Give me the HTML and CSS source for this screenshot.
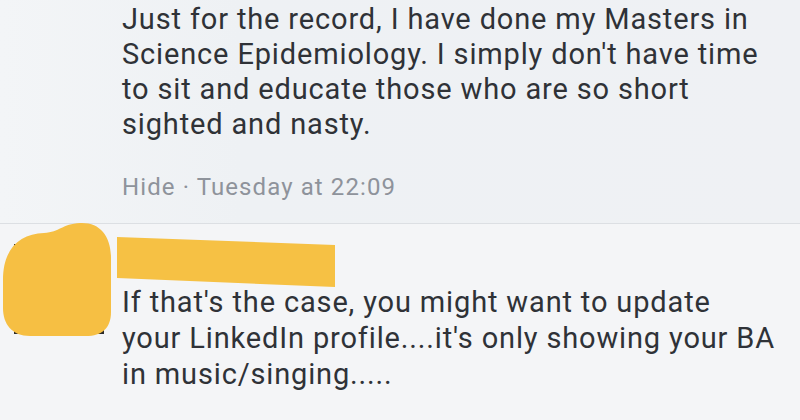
FILE: index.html
```html
<!DOCTYPE html>
<html>
<head>
<meta charset="utf-8">
<link rel="stylesheet" href="styles.css">
</head>
<body>
<div class="thread">
  <section class="comment comment-top">
    <div class="spacer"></div>
    <div class="body">
      <p class="text text-top">Just for the record, I have done my Masters in Science Epidemiology. I simply don't have time to sit and educate those who are so short sighted and nasty.</p>
      <div class="meta">Hide · Tuesday at 22:09</div>
    </div>
  </section>
  <section class="comment comment-bottom">
    <div class="avatar">
      <svg width="112" height="116" viewBox="0 0 112 116">
        <rect x="14" y="22" width="90" height="90" fill="#2a2a2a"/>
        <path d="M3,58 C3,26 20,12 44,11 C60,10 62,2 80,1 C100,0 111,14 111,36 L111,90 C111,106 102,114 86,114 L30,114 C12,114 3,102 3,86 Z" fill="#f6bf43"/>
      </svg>
    </div>
    <div class="body">
      <div class="name"><svg width="220" height="50" viewBox="0 0 220 50"><path d="M0,0 L218,8 L218,50 L0,41 Z" fill="#f6c144"/></svg></div>
      <p class="text text-bottom">If that's the case, you might want to update your LinkedIn profile....it's only showing your BA in music/singing.....</p>
    </div>
  </section>
</div>
</body>
</html>
```

FILE: styles.css
```css
html, body {
  margin: 0;
  padding: 0;
}
body {
  width: 800px;
  height: 420px;
  overflow: hidden;
  background: #f4f5f7;
  font-family: Roboto, "Noto Sans", sans-serif;
  color: #2f3237;
}
.thread {
  display: flex;
  flex-direction: column;
}
.comment {
  display: flex;
  gap: 12px;
}
.comment-top {
  background: linear-gradient(90deg, #f3f5f7 0%, #eef1f4 30%, #eff1f4 100%);
  padding: 2px 0 21px 0;
  border-bottom: 1px solid #dcdfe3;
}
.spacer {
  width: 110px;
  flex: none;
}
.avatar {
  width: 110px;
  flex: none;
  margin-top: -2px;
  height: 116px;
}
.avatar svg {
  display: block;
}
.body {
  flex: 1;
  min-width: 0;
}
.text {
  margin: 0;
  font-size: 29px;
  line-height: 35px;
  letter-spacing: 0.85px;
}
.text-top {
  max-width: 655px;
}
.text-bottom {
  line-height: 36px;
  max-width: 653px;
}
.meta {
  margin-top: 30px;
  font-size: 24px;
  line-height: 30px;
  letter-spacing: 1.1px;
  color: #8e939b;
}
.name {
  margin-top: 13px;
  margin-left: -5px;
  margin-bottom: -3px;
  height: 50px;
}
.name svg {
  display: block;
}
```
